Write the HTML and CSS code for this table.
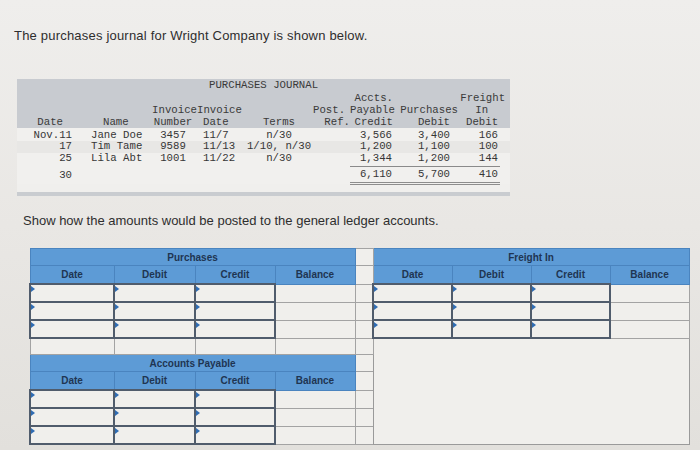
FILE: index.html
```html
<!DOCTYPE html>
<html>
<head>
<meta charset="utf-8">
<title>Purchases Journal</title>
<link rel="stylesheet" href="styles.css">
</head>
<body>
<p class="intro first-line">The purchases journal for Wright Company is shown below.</p>

<div class="journal-wrap">
<table class="journal">
  <colgroup>
    <col class="c-date"><col class="c-name"><col class="c-num"><col class="c-idate"><col class="c-terms"><col class="c-ref"><col class="c-ap"><col class="c-pur"><col class="c-fr"><col class="c-pad">
  </colgroup>
  <thead>
    <tr class="jt"><th colspan="10">PURCHASES JOURNAL</th></tr>
    <tr><th></th><th></th><th></th><th></th><th></th><th></th><th class="ap">Accts.</th><th></th><th colspan="2" class="fr1">Freight</th></tr>
    <tr><th></th><th></th><th class="inv1">Invoice</th><th class="idate">Invoice</th><th></th><th class="post">Post.</th><th class="ap">Payable</th><th class="pur">Purchases</th><th colspan="2" class="fr2">In</th></tr>
    <tr><th class="date-h">Date</th><th class="name-h">Name</th><th class="num">Number</th><th class="idate-h">Date</th><th class="terms">Terms</th><th class="ref">Ref.</th><th class="ap">Credit</th><th class="pur-d">Debit</th><th colspan="2" class="fr3">Debit</th></tr>
  </thead>
  <tbody>
    <tr class="first"><td class="d">Nov.11</td><td class="n">Jane Doe</td><td class="num">3457</td><td class="idt">11/7</td><td class="terms">n/30</td><td></td><td class="amt a1">3,566</td><td class="amt a2">3,400</td><td class="amt a3">166</td><td></td></tr>
    <tr class="alt"><td class="d">17</td><td class="n">Tim Tame</td><td class="num">9589</td><td class="idt">11/13</td><td class="terms">1/10, n/30</td><td></td><td class="amt a1">1,200</td><td class="amt a2">1,100</td><td class="amt a3">100</td><td></td></tr>
    <tr class="last"><td class="d">25</td><td class="n">Lila Abt</td><td class="num">1001</td><td class="idt">11/22</td><td class="terms">n/30</td><td></td><td class="amt a1">1,344</td><td class="amt a2">1,200</td><td class="amt a3">144</td><td></td></tr>
    <tr class="total"><td class="d">30</td><td></td><td></td><td></td><td></td><td></td><td class="amt a1">6,110</td><td class="amt a2">5,700</td><td class="amt a3">410</td><td></td></tr>
  </tbody>
</table>
</div>

<p class="intro second">Show how the amounts would be posted to the general ledger accounts.</p>

<table class="ledger">
  <colgroup>
    <col class="l1"><col class="l2"><col class="l3"><col class="l4"><col class="sp"><col class="r1"><col class="r2"><col class="r3"><col class="r4">
  </colgroup>
  <tr class="h-title">
    <th colspan="4">Purchases</th><td class="spc"></td><th colspan="4">Freight In</th>
  </tr>
  <tr class="h-cols">
    <th>Date</th><th>Debit</th><th>Credit</th><th>Balance</th><td class="spc"></td><th>Date</th><th>Debit</th><th>Credit</th><th>Balance</th>
  </tr>
  <tr class="row">
    <td class="in"></td><td class="in"></td><td class="in"></td><td class="bal"></td><td class="spc"></td><td class="in"></td><td class="in"></td><td class="in"></td><td class="bal"></td>
  </tr>
  <tr class="row">
    <td class="in"></td><td class="in"></td><td class="in"></td><td class="bal"></td><td class="spc"></td><td class="in"></td><td class="in"></td><td class="in"></td><td class="bal"></td>
  </tr>
  <tr class="row">
    <td class="in"></td><td class="in"></td><td class="in"></td><td class="bal"></td><td class="spc"></td><td class="in"></td><td class="in"></td><td class="in"></td><td class="bal"></td>
  </tr>
  <tr class="row plain">
    <td class="bal"></td><td class="bal"></td><td class="bal"></td><td class="bal"></td><td class="spc"></td><td class="big" colspan="4" rowspan="6"></td>
  </tr>
  <tr class="h-title">
    <th colspan="4">Accounts Payable</th><td class="spc"></td>
  </tr>
  <tr class="h-cols">
    <th>Date</th><th>Debit</th><th>Credit</th><th>Balance</th><td class="spc"></td>
  </tr>
  <tr class="row">
    <td class="in"></td><td class="in"></td><td class="in"></td><td class="bal"></td><td class="spc"></td>
  </tr>
  <tr class="row">
    <td class="in"></td><td class="in"></td><td class="in"></td><td class="bal"></td><td class="spc"></td>
  </tr>
  <tr class="row">
    <td class="in"></td><td class="in"></td><td class="in"></td><td class="bal"></td><td class="spc"></td>
  </tr>
</table>
</body>
</html>
```

FILE: styles.css
```css
html {
  background: #e6e4e1;
}

body {
  margin: 0;
  min-height: 450px;
  background: linear-gradient(180deg, #efeeec 0%, #e9e7e4 50%, #e2e0dc 100%);
  font-family: "Liberation Sans", Arial, sans-serif;
  color: #2f2f2f;
  overflow: hidden;
}

.intro {
  margin: 28px 0 0 14px;
  font-size: 13px;
  line-height: 16px;
  color: #2e2e2e;
}

.intro.first-line {
  letter-spacing: 0.2px;
}

.intro.second {
  margin: 17px 0 0 23px;
}

/* ---------- Purchases journal ---------- */
.journal-wrap {
  margin: 35px 0 0 17px;
  width: 493px;
  border-bottom: 4px solid #c9ccd0;
  padding-bottom: 7px;
  background: #f0efed;
}

.journal {
  width: 493px;
  table-layout: fixed;
  border-collapse: collapse;
  font-family: "Liberation Mono", "Courier New", monospace;
  font-size: 10.7px;
  color: #363636;
}

.c-date { width: 61px; }
.c-name { width: 71px; }
.c-num { width: 48px; }
.c-idate { width: 48px; }
.c-terms { width: 68px; }
.c-ref { width: 37px; }
.c-ap { width: 46px; }
.c-pur { width: 64px; }
.c-fr { width: 40px; }
.c-pad { width: 10px; }

.journal thead {
  background: #c8cbd0;
}

.journal th {
  font-weight: normal;
  padding: 0;
  height: 12px;
  line-height: 12px;
  white-space: nowrap;
  text-align: right;
  color: #3a3a3a;
}

.journal .jt th {
  height: 13px;
  line-height: 13px;
  text-align: center;
}

.journal .date-h { padding-right: 15px; }
.journal .name-h { text-align: left; padding-left: 25px; }
.journal .num { text-align: center; }
.journal .inv1 { text-align: right; padding-right: 0; }
.journal .idate { text-align: left; }
.journal .idate-h { text-align: left; padding-left: 6px; }
.journal .terms { text-align: center; }
.journal .post { padding-right: 8px; }
.journal .ref { padding-right: 0; }
.journal .ap { padding-right: 3px; }
.journal .pur { padding-right: 2px; }
.journal .pur-d { padding-right: 10px; }
.journal .fr1 { padding-right: 5px; }
.journal .fr2 { padding-right: 22px; }
.journal .fr3 { padding-right: 12px; }

.journal td {
  padding: 0;
  height: 11.5px;
  line-height: 11.5px;
  white-space: nowrap;
}

.journal tbody tr {
  background: #f1f0ee;
}

.journal tbody tr.alt {
  background: #e8e7e5;
}

.journal tr.first td {
  padding-top: 1.5px;
}

.journal tr.last td {
  padding-bottom: 2px;
}

.journal tr.last td.amt {
  border-bottom: 1px solid #8a8a8a;
}

.journal tr.total td {
  height: 15px;
  line-height: 15px;
}

.journal tr.total td.amt {
  border-bottom: 3px double #8d8d8d;
}

.journal .d { text-align: right; padding-right: 6px; }
.journal .n { text-align: left; padding-left: 13px; }
.journal .idt { text-align: left; padding-left: 6px; }
.journal .amt { text-align: right; }
.journal .a1 { padding-right: 4px; }
.journal .a2 { padding-right: 10px; }
.journal .a3 { padding-right: 2px; }

/* ---------- Ledger accounts ---------- */
.ledger {
  margin: 19px 0 0 29px;
  width: 659px;
  table-layout: fixed;
  border-collapse: collapse;
  font-family: "Liberation Sans", Arial, sans-serif;
}

.l1 { width: 84px; }
.l2 { width: 81px; }
.l3 { width: 80px; }
.l4 { width: 80px; }
.sp { width: 18px; }
.r1, .r2, .r3, .r4 { width: 79px; }

.ledger th {
  background: #5d9bd6;
  border: 1px solid #4a84bf;
  color: #1f3552;
  font-size: 10px;
  font-weight: bold;
  padding: 0;
  text-align: center;
}

.ledger .h-title th,
.ledger .h-title td {
  height: 16px;
}

.ledger .h-cols th,
.ledger .h-cols td {
  height: 17px;
}

.ledger td {
  padding: 0;
  background: #f0efec;
  border: 1px solid #a3a3a3;
}

.ledger .row td {
  height: 16px;
}

.ledger .row.plain td {
  height: 15px;
}

.ledger td.in {
  position: relative;
  border: 2px solid #505c6c;
}

.ledger td.in::before {
  content: "";
  position: absolute;
  left: 0;
  top: 1px;
  border-left: 4px solid #2f6cb3;
  border-top: 3px solid transparent;
  border-bottom: 3px solid transparent;
}

.ledger td.big {
  border: 1px solid #9a9a9a;
}
```
